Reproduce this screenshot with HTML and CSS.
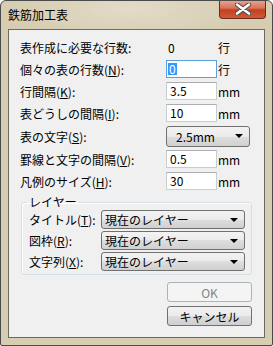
FILE: index.html
```html
<!DOCTYPE html>
<html lang="ja">
<head>
    <meta charset="UTF-8">
    <title>鉄筋加工表</title>
    <link rel="stylesheet" href="styles.css">
</head>
<body>
    <div class="window">
        <div class="titlebar">
            <span class="title">鉄筋加工表</span>
            <div class="close">
                <svg width="16" height="12" viewBox="0 0 16 12">
                    <path d="M2 1.5 L8 6 L14 1.5 M2 10.5 L8 6 L14 10.5" stroke="#4a4a4a" stroke-width="4.6" fill="none" stroke-linecap="round"/>
                    <path d="M2 1.5 L8 6 L14 1.5 M2 10.5 L8 6 L14 10.5" stroke="#ffffff" stroke-width="2.6" fill="none" stroke-linecap="round"/>
                </svg>
            </div>
        </div>
        <div class="client">
            <div class="row">
                <span class="label">表作成に必要な行数:</span>
                <span class="value">0</span>
                <span class="unit">行</span>
            </div>
            <div class="row">
                <span class="label">個々の表の行数(<u>N</u>):</span>
                <span class="field focus"><span class="selected">0</span></span>
                <span class="unit">行</span>
            </div>
            <div class="row">
                <span class="label">行間隔(<u>K</u>):</span>
                <span class="field">3.5</span>
                <span class="unit">mm</span>
            </div>
            <div class="row">
                <span class="label">表どうしの間隔(<u>I</u>):</span>
                <span class="field">10</span>
                <span class="unit">mm</span>
            </div>
            <div class="row tall">
                <span class="label">表の文字(<u>S</u>):</span>
                <span class="combo size">2.5mm<span class="arrow"></span></span>
            </div>
            <div class="row">
                <span class="label">罫線と文字の間隔(<u>V</u>):</span>
                <span class="field">0.5</span>
                <span class="unit">mm</span>
            </div>
            <div class="row">
                <span class="label">凡例のサイズ(<u>H</u>):</span>
                <span class="field">30</span>
                <span class="unit">mm</span>
            </div>

            <fieldset class="group">
                <legend>レイヤー</legend>
                <div class="grow">
                    <span class="glabel">タイトル(<u>T</u>):</span>
                    <span class="combo layer">現在のレイヤー<span class="arrow"></span></span>
                </div>
                <div class="grow">
                    <span class="glabel">図枠(<u>R</u>):</span>
                    <span class="combo layer">現在のレイヤー<span class="arrow"></span></span>
                </div>
                <div class="grow">
                    <span class="glabel">文字列(<u>X</u>):</span>
                    <span class="combo layer">現在のレイヤー<span class="arrow"></span></span>
                </div>
            </fieldset>

            <div class="buttons">
                <button class="btn" disabled>OK</button>
                <button class="btn">キャンセル</button>
            </div>
        </div>
    </div>
</body>
</html>
```

FILE: styles.css
```css
body {
    margin: 0;
    font-family: "Noto Sans CJK JP", "Noto Sans", sans-serif;
    font-size: 12px;
    color: #000;
}

.window {
    width: 273px;
    height: 346px;
    box-sizing: border-box;
    border: 1px solid #4b4b4b;
    border-radius: 6px 6px 2px 2px;
    background: radial-gradient(ellipse 120px 30px at 130px 8px, #e2dcc8 0%, #d6cdb2 100%);
    background-color: #d4cbaf;
    display: flex;
    flex-direction: column;
    overflow: hidden;
}

.titlebar {
    height: 28px;
    display: flex;
    justify-content: space-between;
    align-items: flex-start;
}

.title {
    padding: 6px 0 0 7px;
    font-size: 12px;
    line-height: 16px;
    color: #000;
}

.close {
    width: 47px;
    height: 19px;
    margin: -1px 6px 0 0;
    box-sizing: border-box;
    border: 1px solid #6a2b1c;
    border-top: none;
    border-radius: 0 0 4px 4px;
    background: linear-gradient(#e9a693 0%, #d8735a 45%, #c3401f 55%, #d0583a 100%);
    display: flex;
    justify-content: center;
    align-items: center;
}

.client {
    flex: 1;
    margin: 0 7px 7px 7px;
    border: 1px solid #6e6a60;
    background-color: #f0f0f0;
    padding: 6px 12px 0 11px;
}

.row {
    display: flex;
    align-items: center;
    height: 22px;
}

.row.tall {
    height: 24px;
}

.label {
    width: 146px;
    white-space: nowrap;
}

.value {
    width: 51px;
    padding-left: 2px;
    box-sizing: border-box;
}

.unit {
    margin-left: 1px;
}

.field {
    width: 51px;
    height: 18px;
    box-sizing: border-box;
    border: 1px solid #c8ccd3;
    border-top-color: #abadb3;
    background-color: #fff;
    padding-left: 3px;
    line-height: 16px;
}

.field.focus {
    border-color: #5a9fe0;
    padding-left: 1px;
}

.selected {
    display: inline-block;
    background-color: #3399ff;
    color: #fff;
    line-height: 12px;
    padding: 0 1px;
    margin-top: 2px;
}

.combo {
    position: relative;
    box-sizing: border-box;
    border: 1px solid #707070;
    border-radius: 3px;
    background: linear-gradient(#f3f3f3 0%, #ebebeb 50%, #dedede 50%, #d0d0d0 100%);
    display: flex;
    align-items: center;
}

.combo.size {
    width: 84px;
    height: 21px;
    padding-left: 9px;
}

.combo.layer {
    width: 144px;
    height: 19px;
    padding-left: 3px;
}

.arrow {
    position: absolute;
    right: 6px;
    top: 50%;
    margin-top: -2px;
    width: 0;
    height: 0;
    border-left: 4px solid transparent;
    border-right: 4px solid transparent;
    border-top: 4px solid #000;
}

.group {
    margin: 3px 0 0 1px;
    padding: 0 0 2px 5px;
    border: 1px solid #d5dfe5;
    border-radius: 3px;
    box-shadow: inset 1px 1px 0 #fff;
}

.group legend {
    padding: 0 2px;
    line-height: 14px;
}

.grow {
    display: flex;
    align-items: center;
    height: 21px;
}

.glabel {
    width: 72px;
    padding-left: 2px;
    white-space: nowrap;
}

.buttons {
    display: flex;
    flex-direction: column;
    align-items: flex-end;
    gap: 4px;
    margin-top: 7px;
}

.btn {
    width: 85px;
    height: 20px;
    box-sizing: border-box;
    border: 1px solid #707070;
    border-radius: 3px;
    background: linear-gradient(#f2f2f2 0%, #ebebeb 50%, #dddddd 50%, #cfcfcf 100%);
    font-family: inherit;
    font-size: 12px;
    color: #000;
    padding: 0;
}

.btn:disabled {
    border-color: #adb2b5;
    background: #f4f4f4;
    color: #838383;
}
```
